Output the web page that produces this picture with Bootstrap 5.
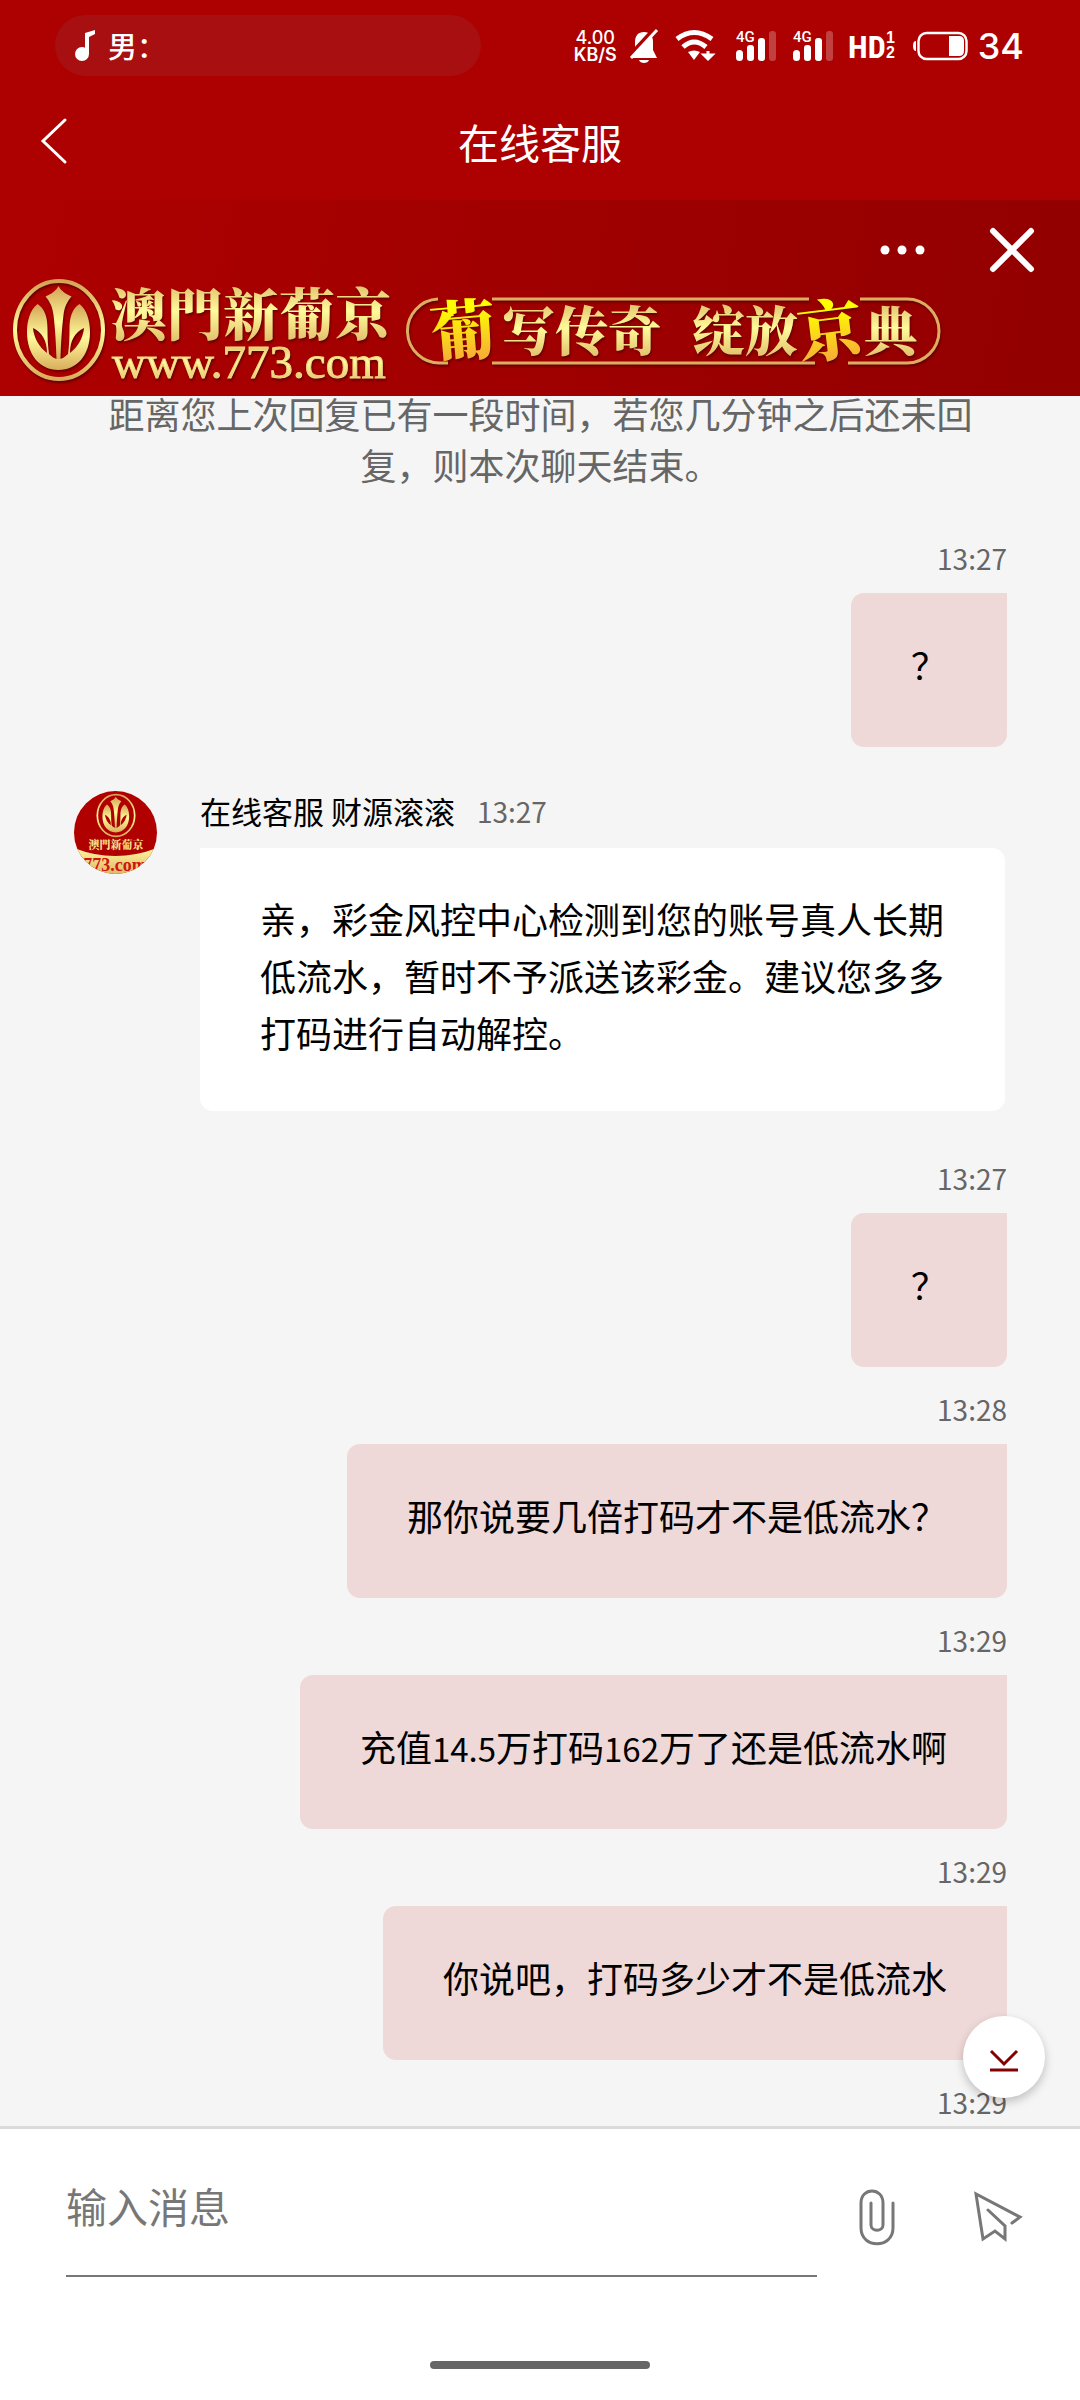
<!DOCTYPE html>
<html lang="zh-CN">
<head>
<meta charset="utf-8">
<meta name="viewport" content="width=device-width, initial-scale=1">
<title>在线客服</title>
<link href="https://cdn.jsdelivr.net/npm/bootstrap@5.3.0/dist/css/bootstrap.min.css" rel="stylesheet">
<style>
  :root { --brand: #ad0000; --ink-soft: #666; --bubble-pink: #efd8d8; }
  body { font-family: "Noto Sans CJK SC", "Noto Sans", sans-serif; color: #000; background: #f5f5f5; }
  svg { display: block; flex: none; overflow: visible; }

  .status-bar { background: var(--brand); padding: 15px 56px 10px 55px; font-family: Inter, "Noto Sans CJK SC", sans-serif; }
  .now-playing { width: 426px; height: 61px; padding-left: 20px; gap: 12px; background: #a70f11; font: 500 29px/61px "Noto Sans CJK SC", sans-serif; }
  .net-speed { font-size: 18px; line-height: 17px; font-weight: 500; margin-right: 13px; }
  .net-speed strong { font-weight: 600; }
  .sys-icons { gap: 17px; }
  .battery-level { font-size: 36px; line-height: 40px; font-weight: 500; margin-left: 9px; }

  .title-bar { background: var(--brand); height: 114px; padding: 0 41px 4px; }
  .title-bar h1 { font-size: 41px; line-height: 60px; font-weight: 400; }
  .bar-side { width: 44px; }

  .brand-banner { background: linear-gradient(100deg, #ae0000 0%, #a00000 50%, #920000 100%); padding: 28px 46px 10px 0; }
  .banner-actions { gap: 65px; height: 44px; margin-bottom: 4px; }
  .brand-text { font-family: "Noto Serif CJK TC", "Noto Sans CJK TC", serif; font-weight: 900; }

  .chat-log { padding: 0 73px 0 74px; min-height: 0; }
  .system-note { color: var(--ink-soft); font-size: 36px; line-height: 51px; padding: 0 32px; margin-bottom: 46px; margin-top: -8px; }
  .msg-time { color: var(--ink-soft); font-size: 28px; line-height: 44px; }
  .sent { margin-bottom: 20px; }
  .sent .msg-time { margin-bottom: 13px; }
  .bubble { font-size: 36px; line-height: 57px; }
  .figures { font-size: 33px; line-height: 1; }
  .bubble-out { background: var(--bubble-pink); border-radius: 13px 0 13px 13px; padding: 43px 60px 54px; }
  .bubble-in { background: #fff; border-radius: 0 13px 13px 13px; padding: 42px 60px 50px; margin-right: 2px; }
  .received { gap: 43px; margin-top: 44px; margin-bottom: 45px; }
  .agent-line { font-size: 31px; line-height: 40px; gap: 22px; margin-bottom: 17px; }
  .agent-line .msg-time { line-height: 40px; }

  .composer { background: #fff; border-top: 3px solid #dadada; padding: 28px 0 31px; }
  .composer form { padding: 0 42px 0 66px; }
  .composer input { font-size: 41px; line-height: 60px; height: 120px; padding: 18px 0 40px; color: #000;
    background: transparent; border: 0; border-bottom: 2px solid #777; border-radius: 0; min-width: 0; }
  .composer input::placeholder { color: #777; opacity: 1; }
  .tool-btn { width: 80px; height: 80px; margin-left: 20px; }
  .tool-btn + .tool-btn { margin-left: 41px; }
  .jump-btn { width: 82px; height: 82px; right: 35px; bottom: calc(100% + 31px); background: #fff; box-shadow: 0 4px 10px rgba(0,0,0,.22); }
  .home-bar { width: 220px; height: 8px; border-radius: 4px; background: #666; margin-top: 84px; }
</style>
<script src="https://cdn.jsdelivr.net/npm/bootstrap@5.3.0/dist/js/bootstrap.bundle.min.js"></script>
</head>
<body class="d-flex flex-column vh-100 overflow-hidden">

<!-- shared gradients and emblem -->
<svg width="0" height="0" class="position-absolute" aria-hidden="true">
  <defs>
    <linearGradient id="gold" x1="0" y1="0" x2="0" y2="1">
      <stop offset="0" stop-color="#d3a255"/><stop offset=".5" stop-color="#fffb9b"/><stop offset="1" stop-color="#d9ad5c"/>
    </linearGradient>
    <linearGradient id="sun" x1="0" y1="0" x2="0" y2="1">
      <stop offset=".3" stop-color="#ffff00"/><stop offset=".9" stop-color="#f6a63c"/>
    </linearGradient>
    <linearGradient id="cream" x1="0" y1="0" x2="0" y2="1">
      <stop offset="0" stop-color="#fff7a0"/><stop offset="1" stop-color="#dfb866"/>
    </linearGradient>
    <symbol id="emblem" viewBox="0 0 94 106">
      <ellipse cx="47" cy="53" rx="44" ry="49" fill="none" stroke="url(#gold)" stroke-width="4"/>
      <path fill="url(#gold)" d="M46.500 9C44 14 39 17 33.500 19.500C38 25 40.500 30 41.500 38C43 50 44 66 44.500 82H48.500C49 66 50 50 51.500 38C52.500 30 55 25 59.500 19.500C54 17 49 14 46.500 9Z"/>
      <path fill="url(#gold)" fill-rule="evenodd" d="M25.500 27C18 33 15 44 15 55C15 78 28 93 46.500 93S78 78 78 55C78 44 75 33 67.500 27C60 32 57.500 40 57.500 52C57.500 62 57 70 56 77C53 80 50 82 46.500 82S40 80 37 77C36 70 35.500 62 35.500 52C35.500 40 33 32 25.500 27ZM21 51C30 55 35 64 35 76C27 70 22 61 21 51ZM72 51C71 61 66 70 58 76C58 64 63 55 72 51Z"/>
    </symbol>
    <symbol id="signal" viewBox="0 0 40 32" overflow="visible">
      <g fill="#fff"><rect y="20" width="7" height="11" rx="3.500"/><rect x="11" y="15" width="7" height="16" rx="3"/><rect x="22" y="8" width="7" height="23" rx="3"/><rect x="33" y="1" width="7" height="30" rx="3" opacity=".25"/></g>
      <text x="0" y="12" fill="#fff" font-family="Roboto, sans-serif" font-size="15" font-weight="500">4G</text>
    </symbol>
  </defs>
</svg>

<header class="text-white flex-shrink-0">
  <div class="status-bar d-flex align-items-center justify-content-between">
    <div class="now-playing d-flex align-items-center rounded-pill">
      <svg width="21" height="32" viewBox="0 0 21 32" fill="#fff"><ellipse cx="7" cy="24" rx="7" ry="7"/><path d="M10 3L20 0V4L14 7V24H10Z"/></svg>
      <span>男：</span>
    </div>
    <div class="d-flex align-items-center">
      <div class="net-speed text-center">4.00<br><strong>KB/S</strong></div>
      <div class="sys-icons d-flex align-items-center">
        <svg width="28" height="34" viewBox="0 0 28 34"><path d="M14 3C8 3 5 7 5 13V20L1 29H27L23 21V13C23 7 20 3 14 3ZM9 31H19C18 35 10 35 9 31Z" fill="#fff"/><path d="M-1 27L25-1" stroke="#ad0000" stroke-width="4"/><path d="M1 29L27 1" stroke="#fff" stroke-width="3"/></svg>
        <svg width="40" height="32" viewBox="0 0 40 32" fill="none" stroke="#fff"><path d="M2 9Q19-4 37 9" stroke-width="5"/><path d="M8 17Q19 7 31 17" stroke-width="5"/><path d="M13 22Q19 19 25 22L19 30Z" fill="#fff" stroke="none"/><path d="M33 21V27M29 25L33 29L37 25Z" stroke-width="3"/></svg>
        <svg class="ms-1" width="40" height="32"><use href="#signal"/></svg>
        <svg width="40" height="32"><use href="#signal"/></svg>
        <svg width="46" height="32" viewBox="0 0 46 32" fill="#fff" font-weight="700"><text x="-2" y="28" font-family="'Liberation Sans Narrow', 'Roboto Condensed', sans-serif" font-size="32">HD</text><g font-family="'Liberation Sans', sans-serif" font-size="16"><text x="36" y="13">1</text><text x="36" y="28">2</text></g></svg>
        <svg width="56" height="30" viewBox="0 0 56 30"><rect x="5.500" y="2" width="48" height="26" rx="8" fill="none" stroke="#fff" stroke-width="2.500"/><path d="M36 5H46Q51 5 51 10V20Q51 25 46 25H36ZM3 10V20Q0 20 0 15Q0 10 3 10Z" fill="#fff"/></svg>
      </div>
      <span class="battery-level">34</span>
    </div>
  </div>

  <nav class="title-bar d-flex align-items-center justify-content-between" aria-label="页面标题">
    <button type="button" class="btn p-0 border-0 bar-side" aria-label="返回">
      <svg width="26" height="46" viewBox="0 0 26 46" fill="none" stroke="#fff" stroke-width="3" stroke-linecap="round"><path d="M24 2L2 23L24 44"/></svg>
    </button>
    <h1 class="m-0">在线客服</h1>
    <span class="bar-side"></span>
  </nav>

  <div class="brand-banner">
    <div class="banner-actions d-flex align-items-center justify-content-end">
      <button type="button" class="btn p-0 border-0" aria-label="更多">
        <svg width="45" height="44" viewBox="0 0 45 44" fill="#fff"><circle cx="5" cy="22" r="4.500"/><circle cx="22" cy="22" r="4.500"/><circle cx="40" cy="22" r="4.500"/></svg>
      </button>
      <button type="button" class="btn p-0 border-0" aria-label="关闭">
        <svg width="44" height="44" viewBox="0 0 44 44" stroke="#fff" stroke-width="6" stroke-linecap="round"><path d="M3 3L41 41M41 3L3 41"/></svg>
      </button>
    </div>
    <svg width="950" height="110" viewBox="0 0 950 110" role="img" aria-label="澳門新葡京">
      <g filter="drop-shadow(1px 2px 1px #600)">
        <use href="#emblem" x="12" y="1" width="94" height="106"/>
        <text class="brand-text" x="111" y="59" font-size="56" fill="url(#gold)">澳門新葡京</text>
        <text x="112" y="102" font-family="'Liberation Serif', serif" font-size="47" fill="url(#gold)" stroke="#f3d884">www.773.com</text>
        <path d="M438 23A32 32 0 0 0 441 87H448M492 23H809M860 23H907A32 32 0 0 1 907 87H848M492 87H815" fill="none" stroke="#dcae62" stroke-width="3"/>
        <g class="brand-text" fill="url(#gold)" font-size="53">
          <text x="502" y="75">写传奇</text><text x="692" y="75">绽放</text><text x="864" y="75">典</text>
        </g>
        <g class="brand-text" fill="url(#sun)" font-size="66">
          <text x="430" y="79" transform="rotate(-5 462 54)">葡</text><text x="797" y="79" transform="rotate(-7 830 54)">京</text>
        </g>
      </g>
    </svg>
  </div>
</header>

<main class="chat-log flex-grow-1 overflow-hidden">
  <p class="system-note text-center">距离您上次回复已有一段时间，若您几分钟之后还未回复，则本次聊天结束。</p>

  <div class="sent d-flex flex-column align-items-end">
    <time class="msg-time">13:27</time>
    <div class="bubble bubble-out">？</div>
  </div>

  <div class="received d-flex align-items-start">
    <svg width="83" height="83" viewBox="0 0 83 83" role="img" aria-label="客服头像">
      <clipPath id="disc"><circle cx="41.500" cy="41.500" r="41.500"/></clipPath>
      <g clip-path="url(#disc)">
        <rect width="83" height="83" fill="#b00000"/>
        <path d="M0 57Q41 73 83 57V83H0Z" fill="url(#cream)"/>
        <use href="#emblem" x="22" y="2" width="40" height="45"/>
        <text class="brand-text" x="42" y="58" font-size="11" text-anchor="middle" fill="#f5dc8a">澳門新葡京</text>
        <text x="41" y="80" font-size="18" font-weight="700" text-anchor="middle" font-family="'Liberation Serif', serif" fill="#d01410">773.com</text>
      </g>
    </svg>
    <div class="flex-grow-1">
      <div class="agent-line d-flex align-items-center"><span>在线客服 财源滚滚</span><time class="msg-time">13:27</time></div>
      <div class="bubble bubble-in">亲，彩金风控中心检测到您的账号真人长期低流水，暂时不予派送该彩金。建议您多多打码进行自动解控。</div>
    </div>
  </div>

  <div class="sent d-flex flex-column align-items-end">
    <time class="msg-time">13:27</time>
    <div class="bubble bubble-out">？</div>
  </div>
  <div class="sent d-flex flex-column align-items-end">
    <time class="msg-time">13:28</time>
    <div class="bubble bubble-out">那你说要几倍打码才不是低流水？</div>
  </div>
  <div class="sent d-flex flex-column align-items-end">
    <time class="msg-time">13:29</time>
    <div class="bubble bubble-out">充值<span class="figures">14.5</span>万打码<span class="figures">162</span>万了还是低流水啊</div>
  </div>
  <div class="sent d-flex flex-column align-items-end">
    <time class="msg-time">13:29</time>
    <div class="bubble bubble-out">你说吧，打码多少才不是低流水</div>
  </div>
  <div class="d-flex justify-content-end"><time class="msg-time">13:29</time></div>
</main>

<footer class="composer position-relative flex-shrink-0">
  <button type="button" class="jump-btn btn border-0 rounded-circle position-absolute p-0 d-flex align-items-center justify-content-center" aria-label="跳到最新消息">
    <svg width="28" height="24" viewBox="0 0 28 24" fill="none" stroke="#850000" stroke-width="3" class="mt-2"><path d="M1 2L14 15L27 2M0 21H28"/></svg>
  </button>
  <form class="d-flex align-items-center" onsubmit="return false">
    <input type="text" class="flex-grow-1" placeholder="输入消息" aria-label="输入消息">
    <button type="button" class="tool-btn btn p-0 border-0 d-flex align-items-center justify-content-center" aria-label="添加附件">
      <svg width="36" height="56" viewBox="0 0 36 56" fill="none" stroke="#777" stroke-width="3" stroke-linecap="round"><path d="M34 14V39C34 60 2 60 2 39V14C2-2 24-2 24 14V36C24 43 12 43 12 36V14"/></svg>
    </button>
    <button type="submit" class="tool-btn btn p-0 border-0 d-flex align-items-center justify-content-center" aria-label="发送">
      <svg width="48" height="50" viewBox="0 0 48 50" fill="none" stroke="#777" stroke-width="3" stroke-linecap="round"><path d="M38 31L46 25L2 2L9 47L21 39L31 47V34L14 18"/></svg>
    </button>
  </form>
  <div class="home-bar mx-auto"></div>
</footer>
</body>
</html>
